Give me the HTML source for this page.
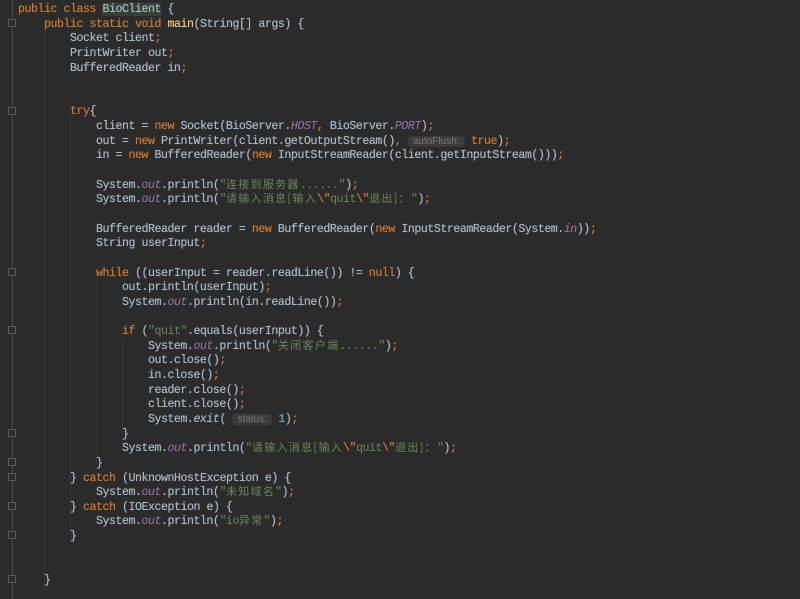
<!DOCTYPE html><html><head><meta charset="utf-8"><style>
body{margin:0;width:800px;height:599px;background:#2b2b2b;overflow:hidden;position:relative}
.g{position:absolute;left:12px;top:0;width:1px;height:599px;background:#4a4a4a}
.ig{position:absolute;width:1px;background:#373737}
pre{position:absolute;left:18px;top:3px;margin:0;font-family:"Liberation Mono","Noto Sans CJK SC",monospace;font-size:11.6px;letter-spacing:-0.46px;line-height:14.64px;color:#a9b7c6;text-shadow:0 0 0.5px #a9b7c6}
.k{color:#cc7832;text-shadow:0 0 .5px #cc7832}.s{color:#6a8759;text-shadow:none}.p{color:#9876aa;font-style:italic;text-shadow:none}.n{color:#6897bb}.m{color:#ffc66d}
.c{font-family:"Noto Sans CJK SC",sans-serif;font-size:11px;letter-spacing:1.3px;line-height:0}
.h{background:#3b3b3b;color:#7a7a7a;font-family:"Liberation Sans",sans-serif;font-size:10px;letter-spacing:0;padding:0 5px;border-radius:3px;text-shadow:none;line-height:0}
.cls{background:#344134}
.f{position:absolute;left:8px;width:8px;height:8px;border:1px solid #5a5a5a;background:#2b2b2b;box-sizing:border-box}
</style></head><body>
<div class="g"></div>
<div class="ig" style="left:44px;top:30px;height:560px"></div>
<div class="ig" style="left:70px;top:118px;height:420px"></div>
<div class="ig" style="left:96px;top:278px;height:185px"></div>
<div class="ig" style="left:122px;top:337px;height:97px"></div>
<div class="f" style="top:19px"></div><div class="f" style="top:107px"></div><div class="f" style="top:268px"></div><div class="f" style="top:326px"></div><div class="f" style="top:429px"></div><div class="f" style="top:458px"></div><div class="f" style="top:473px"></div><div class="f" style="top:502px"></div><div class="f" style="top:531px"></div><div class="f" style="top:575px"></div>
<pre><span class="k">public class</span> <span class="cls">BioClient</span> {
    <span class="k">public static void</span> <span class="m">main</span>(String[] args) {
        Socket client<span class="k">;</span>
        PrintWriter out<span class="k">;</span>
        BufferedReader in<span class="k">;</span>


        <span class="k">try</span>{
            client = <span class="k">new</span> Socket(BioServer.<span class="p">HOST</span><span class="k">,</span> BioServer.<span class="p">PORT</span>)<span class="k">;</span>
            out = <span class="k">new</span> PrintWriter(client.getOutputStream()<span class="k">,</span> <span class="h">autoFlush:</span> <span class="k">true</span>)<span class="k">;</span>
            in = <span class="k">new</span> BufferedReader(<span class="k">new</span> InputStreamReader(client.getInputStream()))<span class="k">;</span>

            System.<span class="p">out</span>.println(<span class="s">"<span class="c">连接到服务器</span>......"</span>)<span class="k">;</span>
            System.<span class="p">out</span>.println(<span class="s">"<span class="c">请输入消息[输入</span><span class="k">\"</span>quit<span class="k">\"</span><span class="c">退出]：</span>"</span>)<span class="k">;</span>

            BufferedReader reader = <span class="k">new</span> BufferedReader(<span class="k">new</span> InputStreamReader(System.<span class="p">in</span>))<span class="k">;</span>
            String userInput<span class="k">;</span>

            <span class="k">while</span> ((userInput = reader.readLine()) != <span class="k">null</span>) {
                out.println(userInput)<span class="k">;</span>
                System.<span class="p">out</span>.println(in.readLine())<span class="k">;</span>

                <span class="k">if</span> (<span class="s">"quit"</span>.equals(userInput)) {
                    System.<span class="p">out</span>.println(<span class="s">"<span class="c">关闭客户端</span>......"</span>)<span class="k">;</span>
                    out.close()<span class="k">;</span>
                    in.close()<span class="k">;</span>
                    reader.close()<span class="k">;</span>
                    client.close()<span class="k">;</span>
                    System.<i>exit</i>( <span class="h">status:</span> <span class="n">1</span>)<span class="k">;</span>
                }
                System.<span class="p">out</span>.println(<span class="s">"<span class="c">请输入消息[输入</span><span class="k">\"</span>quit<span class="k">\"</span><span class="c">退出]：</span>"</span>)<span class="k">;</span>
            }
        } <span class="k">catch</span> (UnknownHostException e) {
            System.<span class="p">out</span>.println(<span class="s">"<span class="c">未知域名</span>"</span>)<span class="k">;</span>
        } <span class="k">catch</span> (IOException e) {
            System.<span class="p">out</span>.println(<span class="s">"io<span class="c">异常</span>"</span>)<span class="k">;</span>
        }


    }</pre>
</body></html>
